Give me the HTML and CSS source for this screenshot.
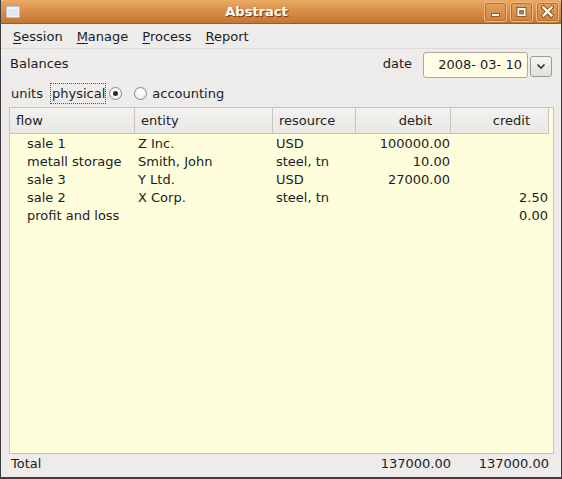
FILE: index.html
```html
<!DOCTYPE html>
<html>
<head>
<meta charset="utf-8">
<title>Abstract</title>
<link rel="stylesheet" href="styles.css">
</head>
<body>
<div class="window">
  <div class="titlebar">
    <span class="app-icon">
      <svg width="14" height="12" viewBox="0 0 14 12"><rect x="0.5" y="0.5" width="13" height="11" rx="1" fill="#eef2f6" stroke="#b8c2cc"/><rect x="2" y="3" width="10" height="7" fill="#dfe8f0"/></svg>
    </span>
    <span class="title">Abstract</span>
    <span class="wbtns">
      <span class="wbtn"><svg width="21" height="18" viewBox="0 0 21 18"><rect x="6.5" y="10.5" width="8" height="3" fill="#fff" stroke="#7a4211" stroke-width="0.8"/></svg></span>
      <span class="wbtn"><svg width="21" height="18" viewBox="0 0 21 18"><rect x="6" y="4.5" width="9" height="9" fill="#fff" stroke="#7a4211" stroke-width="0.8"/><rect x="8" y="7" width="5" height="4.5" fill="#9a7a5a"/></svg></span>
      <span class="wbtn"><svg width="21" height="18" viewBox="0 0 21 18"><path d="M6.5 4.5 L14.5 12.5 M14.5 4.5 L6.5 12.5" stroke="#7a4211" stroke-width="4" stroke-linecap="square"/><path d="M6.5 4.5 L14.5 12.5 M14.5 4.5 L6.5 12.5" stroke="#fff" stroke-width="2.4" stroke-linecap="square"/></svg></span>
    </span>
  </div>
  <div class="menubar">
    <span class="menu"><u>S</u>ession</span>
    <span class="menu"><u>M</u>anage</span>
    <span class="menu"><u>P</u>rocess</span>
    <span class="menu"><u>R</u>eport</span>
  </div>
  <div class="content">
    <div class="toprow">
      <span class="heading">Balances</span>
      <span class="date-label">date</span>
      <span class="date-entry">2008- 03- 10</span>
      <span class="drop-btn"><svg width="10" height="7" viewBox="0 0 10 7"><path d="M1.5 1.5 L5 5 L8.5 1.5" fill="none" stroke="#333" stroke-width="1.6"/></svg></span>
    </div>
    <div class="unitsrow">
      <span class="units-label">units</span>
      <span class="focus-label">physical</span>
      <span class="radio checked"></span>
      <span class="radio"></span>
      <span class="radio-label">accounting</span>
    </div>
    <div class="table">
      <div class="thead">
        <span class="th">flow</span>
        <span class="th">entity</span>
        <span class="th">resource</span>
        <span class="th num">debit</span>
        <span class="th num">credit</span>
        <span class="th-fill"></span>
      </div>
      <div class="tbody">
        <div class="tr"><span class="td flow">sale 1</span><span class="td">Z Inc.</span><span class="td">USD</span><span class="td num">100000.00</span><span class="td num"></span></div>
        <div class="tr"><span class="td flow">metall storage</span><span class="td">Smith, John</span><span class="td">steel, tn</span><span class="td num">10.00</span><span class="td num"></span></div>
        <div class="tr"><span class="td flow">sale 3</span><span class="td">Y Ltd.</span><span class="td">USD</span><span class="td num">27000.00</span><span class="td num"></span></div>
        <div class="tr"><span class="td flow">sale 2</span><span class="td">X Corp.</span><span class="td">steel, tn</span><span class="td num"></span><span class="td num">2.50</span></div>
        <div class="tr"><span class="td flow">profit and loss</span><span class="td"></span><span class="td"></span><span class="td num"></span><span class="td num">0.00</span></div>
      </div>
    </div>
    <div class="totalrow">
      <span class="tt">Total</span>
      <span class="tt"></span>
      <span class="tt"></span>
      <span class="tt num">137000.00</span>
      <span class="tt num">137000.00</span>
    </div>
  </div>
</div>
</body>
</html>
```
FILE: styles.css
```css
* { box-sizing: border-box; }
html, body { margin: 0; padding: 0; }
body {
  font-family: "DejaVu Sans", "Liberation Sans", sans-serif;
  font-size: 13px;
  color: #1c1c1c;
  background: #edeceb;
}
.window {
  width: 562px;
  height: 479px;
  display: flex;
  flex-direction: column;
  border: 1px solid #3e3e3e;
  border-top: none;
  border-bottom-width: 2px;
  background: #edeceb;
  overflow: hidden;
}
.titlebar {
  height: 24px;
  flex: none;
  display: flex;
  align-items: center;
  padding: 0 3px 0 6px;
  background: linear-gradient(#eaab67 0%, #dc924b 40%, #cf8440 70%, #c4772f 100%);
  border-radius: 4px 4px 0 0;
  margin: 0 -1px;
  border-bottom: 1px solid #9c5a1c;
}
.app-icon { display: flex; width: 14px; height: 12px; }
.title {
  flex: 1;
  text-align: center;
  color: #fff;
  font-weight: bold;
  font-size: 13px;
  text-shadow: 1px 1px 1px #6b3a0c;
  padding-left: 9px;
}
.wbtns { display: flex; gap: 3px; }
.wbtn {
  width: 23px;
  height: 20px;
  border: 1px solid #f0bb84;
  border-radius: 3px;
  background: linear-gradient(#e3a15f, #cf843f);
  box-shadow: inset 0 0 0 1px #b86f2c;
  display: flex;
  align-items: center;
  justify-content: center;
}
.menubar {
  height: 25px;
  flex: none;
  display: flex;
  align-items: center;
  padding-left: 5px;
  border-bottom: 1px solid #dcdad6;
}
.menu { padding: 0 7px; }
.menu u { text-decoration-thickness: 1px; text-underline-offset: 2px; }
.content {
  flex: 1;
  display: flex;
  flex-direction: column;
  padding: 0 7px 0 8px;
}
.toprow {
  height: 31px;
  flex: none;
  display: flex;
  align-items: center;
  padding: 2px 2px 0 1px;
}
.heading { flex: 1; margin-top: -4px; }
.date-label { margin-right: 11px; margin-top: -4px; }
.date-entry {
  width: 105px;
  height: 26px;
  border: 1px solid #a9a79e;
  border-radius: 3px;
  background: #fffde6;
  text-align: right;
  padding-right: 5px;
  line-height: 23px;
  margin-top: -2px;
}
.drop-btn {
  width: 22px;
  height: 21px;
  margin-left: 2px;
  margin-top: 1px;
  border: 1px solid #9d9b94;
  border-radius: 3px;
  background: linear-gradient(#f6f5f3, #e2e0dc);
  display: flex;
  align-items: center;
  justify-content: center;
}
.unitsrow {
  height: 27px;
  flex: none;
  display: flex;
  align-items: center;
  padding-left: 2px;
}
.units-label { margin-right: 7px; }
.focus-label {
  border: 1px dotted #555;
  height: 21px;
  line-height: 19px;
  padding: 0 0 0 1px;
}
.radio {
  width: 13px;
  height: 13px;
  border-radius: 50%;
  border: 1px solid #8a8884;
  background: radial-gradient(circle at 50% 35%, #ffffff, #ecebe8);
  margin-left: 3px;
  position: relative;
}
.radio.checked::after {
  content: "";
  position: absolute;
  left: 3px;
  top: 3px;
  width: 5px;
  height: 5px;
  border-radius: 50%;
  background: #2a2a2a;
}
.radio + .radio { margin-left: 12px; }
.radio-label { margin-left: 5px; }
.table {
  flex: 1;
  display: flex;
  flex-direction: column;
  border: 1px solid #c9c7a6;
  background: #fefedd;
}
.thead {
  height: 26px;
  flex: none;
  display: grid;
  grid-template-columns: 125px 138px 83px 95px 98px 1fr;
  background: linear-gradient(#f3f2f0, #e9e8e5);
  border-bottom: 1px solid #c4c2bc;
}
.th {
  border-right: 1px solid #c6c4be;
  padding: 0 6px;
  line-height: 26px;
  color: #222;
}
.th.num { text-align: right; padding-right: 18px; }
.th-fill { background: #fefedd; }
.tbody { flex: 1; padding-top: 1px; }
.tr {
  height: 18px;
  display: grid;
  grid-template-columns: 125px 138px 83px 95px 98px 1fr;
  line-height: 18px;
}
.td { padding: 0 3px; white-space: nowrap; }
.td.flow { padding-left: 17px; }
.td.num { text-align: right; padding-right: 1px; }
.totalrow {
  height: 23px;
  flex: none;
  display: grid;
  grid-template-columns: 126px 138px 83px 95px 98px;
  align-items: start;
  line-height: 18px;
  padding-top: 1px;
  padding-left: 1px;
}
.tt { padding-left: 1px; }
.tt.num { text-align: right; padding-right: 1px; }
```
